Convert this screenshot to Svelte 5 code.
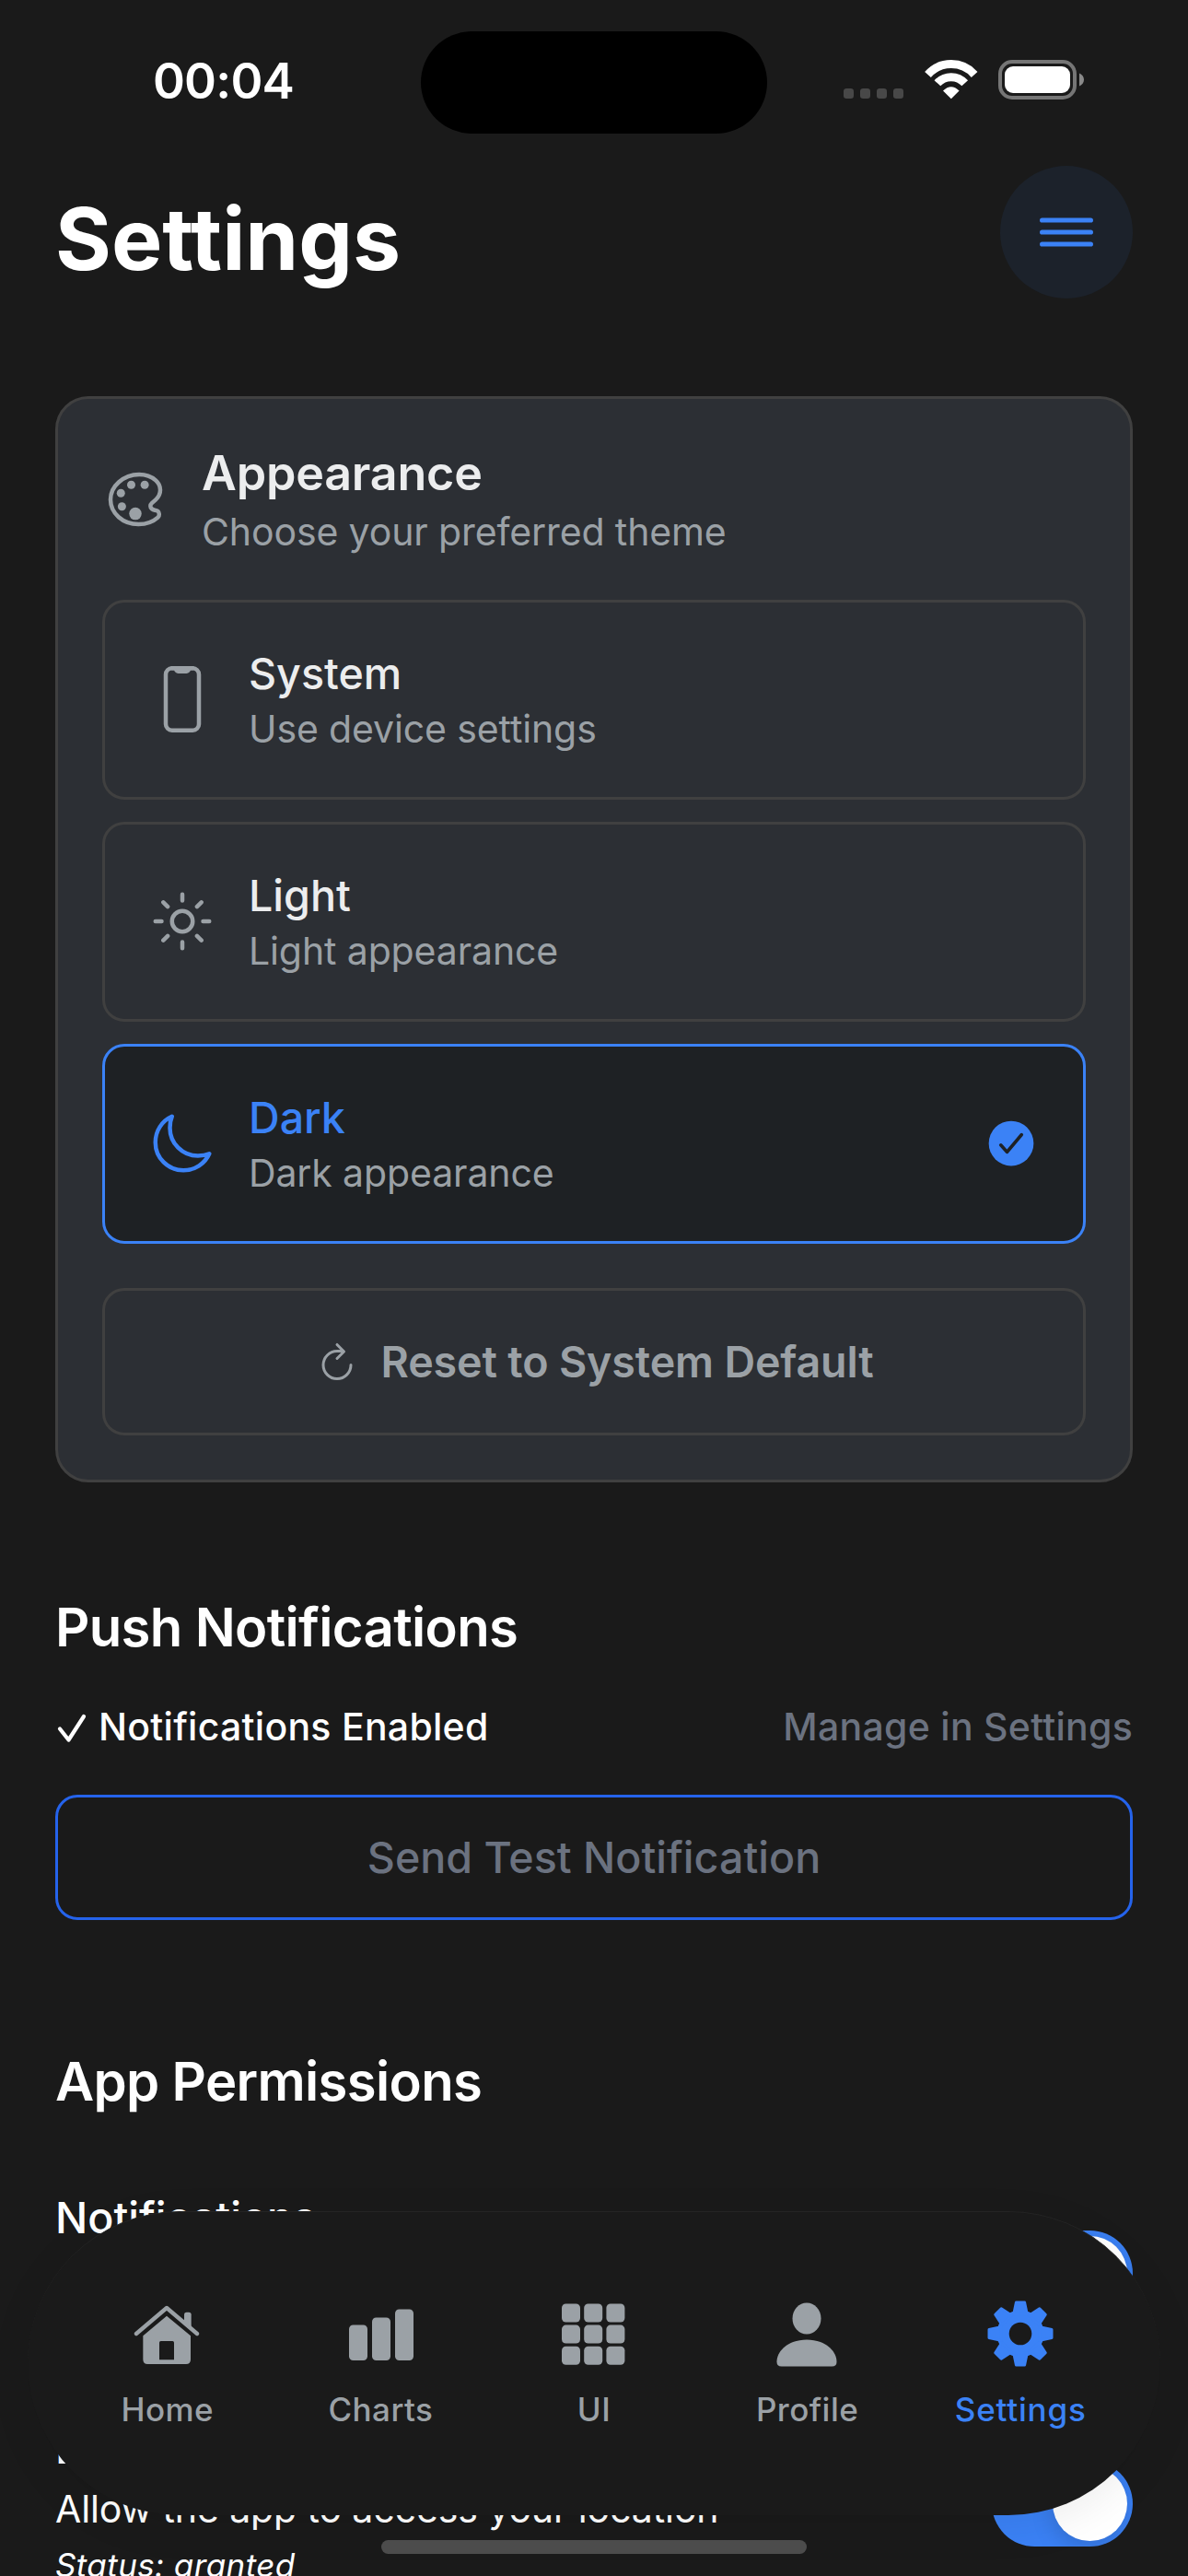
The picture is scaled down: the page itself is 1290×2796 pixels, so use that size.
<script>
  const themes = [
    { id: 'system', title: 'System', hint: 'Use device settings' },
    { id: 'light', title: 'Light', hint: 'Light appearance' },
    { id: 'dark', title: 'Dark', hint: 'Dark appearance' }
  ];
  const permissions = [
    { id: 'notifications', title: 'Notifications', hint: 'Allow the app to send notifications' },
    { id: 'location', title: 'Location', hint: 'Allow the app to access your location' }
  ];
  const tabs = ['Home', 'Charts', 'UI', 'Profile', 'Settings'];
  const teeth = [0, 45, 90, 135, 180, 225, 270, 315];
  const cells = [0, 1, 2];

  let theme = $state('dark');
  let activeTab = $state('Settings');
</script>

<div class="screen">
  <div class="status-bar">
    <div class="time">00:04</div>
    <div class="island"></div>
    <div class="indicators">
      <svg class="dots" width="65" height="43" viewBox="0 0 65 43">
        <rect x="0" y="31" width="11" height="11" rx="3.2" />
        <rect x="18" y="31" width="11" height="11" rx="3.2" />
        <rect x="36" y="31" width="11" height="11" rx="3.2" />
        <rect x="54" y="31" width="11" height="11" rx="3.2" />
      </svg>
      <svg class="wifi" width="58" height="43" viewBox="0 0 58 43">
        <path d="M3.5 15.9A34 34 0 0 1 54.1 15.9" />
        <path d="M13.9 25.3A20 20 0 0 1 43.7 25.3" />
        <path class="solid" d="M20 33.6Q28.8 24.8 37.6 33.6L28.8 42.2Z" />
      </svg>
      <svg class="battery" width="94" height="43" viewBox="0 0 94 43">
        <rect class="shell" x="2" y="2" width="81" height="39" rx="13" />
        <rect class="level" x="7" y="7" width="71" height="29" rx="9" />
        <path class="nub" d="M88 14.6C91 15.8 93 18.4 93 21.5S91 27.2 88 28.4Z" />
      </svg>
    </div>
  </div>

  <header class="header">
    <h1>Settings</h1>
    <button class="menu" aria-label="Menu">
      <svg width="58" height="32" viewBox="0 0 58 32">
        <path d="M2.6 3H55.4M2.6 16H55.4M2.6 29H55.4" />
      </svg>
    </button>
  </header>

  <main>
    <section class="card">
      <div class="card-head">
        <svg class="icon" viewBox="0 0 512 512">
          <path d="M430.11 347.9c-6.6-6.1-16.3-7.6-24.6-9-11.5-1.9-15.9-4-22.6-10-14.3-12.7-14.3-31.1 0-43.8l30.3-26.9c46.4-41 46.4-108.2 0-149.2-34.2-30.1-80.1-45-127.8-45-55.7 0-113.9 20.3-158.8 60.1-83.5 73.8-83.5 194.7 0 268.5 41.5 36.7 97.5 55 152.9 55.4h1.7c55.4 0 110-17.9 148.8-52.4 14.4-12.7 11.99-36.6.1-47.7z" />
          <circle class="fill" cx="144" cy="208" r="32" />
          <circle class="fill" cx="152" cy="311" r="32" />
          <circle class="fill" cx="224" cy="144" r="32" />
          <circle class="fill" cx="256" cy="367" r="48" />
          <circle class="fill" cx="328" cy="144" r="32" />
        </svg>
        <div>
          <h2 class="card-title">Appearance</h2>
          <p class="hint">Choose your preferred theme</p>
        </div>
      </div>

      <div class="options">
        {#each themes as t (t.id)}
          <button class="option" class:selected={theme === t.id} onclick={() => (theme = t.id)}>
            <svg class="icon" viewBox="0 0 512 512">
              {#if t.id === 'system'}
                <rect x="128" y="16" width="256" height="480" rx="48" ry="48" />
                <path d="M176 16h24a8 8 0 0 1 8 8a16 16 0 0 0 16 16h64a16 16 0 0 0 16-16a8 8 0 0 1 8-8h24" />
                <path class="fill" d="M196 16h120l-24 26h-72z" />
              {:else if t.id === 'light'}
                <path d="M256 48v48M256 416v48M403.08 108.92l-33.94 33.94M142.86 369.14l-33.94 33.94M464 256h-48M96 256H48M403.08 403.08l-33.94-33.94M142.86 142.86l-33.94-33.94" />
                <circle cx="256" cy="256" r="80" />
              {:else}
                <path d="M160 136c0-30.62 4.51-61.61 16-88C99.57 81.27 48 159.32 48 248c0 119.29 96.71 216 216 216 88.68 0 166.73-51.57 200-128-26.39 11.49-57.38 16-88 16-119.29 0-216-96.71-216-216z" />
              {/if}
            </svg>
            <span class="option-text">
              <span class="option-title">{t.title}</span>
              <span class="hint">{t.hint}</span>
            </span>
            {#if theme === t.id}
              <svg class="check" viewBox="0 0 512 512">
                <circle cx="256" cy="256" r="208" />
                <path d="M160.5 272L217.5 336L352 176" />
              </svg>
            {/if}
          </button>
        {/each}
      </div>

      <button class="reset" onclick={() => (theme = 'system')}>
        <svg viewBox="0 0 512 512">
          <path d="M320 134H256a160 160 0 1 0 160 160" />
          <path d="M256 58l80 80-80 80" />
        </svg>
        <span>Reset to System Default</span>
      </button>
    </section>

    <h2 class="section-title push">Push Notifications</h2>
    <div class="push-row">
      <span class="enabled">
        <svg width="34" height="34" viewBox="0 0 34 34">
          <path d="M5 18.5L14.5 30.5L31 5" />
        </svg>
        <span>Notifications Enabled</span>
      </span>
      <span class="manage">Manage in Settings</span>
    </div>
    <button class="test">Send Test Notification</button>

    <h2 class="section-title perms">App Permissions</h2>
    <div class="perm-list">
      {#each permissions as p (p.id)}
        <div class="perm">
          <div>
            <div class="perm-title">{p.title}</div>
            <div class="perm-hint">{p.hint}</div>
            <div class="perm-status">Status: granted</div>
          </div>
          <div class="switch"><div class="thumb"></div></div>
        </div>
      {/each}
    </div>
  </main>

  <nav class="tab-bar">
    {#each tabs as tab (tab)}
      <button class="tab" class:active={activeTab === tab} onclick={() => (activeTab = tab)}>
        {#if tab === 'Home'}
          <svg viewBox="48 48 216 216">
            <path class="line" d="M57 156L156 72L255 156" />
            <path d="M213 94Q213 86 221 86H228Q236 86 236 94V144L213 124Z" />
            <path fill-rule="evenodd" d="M156 98L234 163V240Q234 255 219 255H94Q79 255 79 240V163ZM137 180Q132 180 132 185V241H180V185Q180 180 175 180Z" />
          </svg>
        {:else if tab === 'Charts'}
          <svg viewBox="0 0 72 72">
            <rect x="2" y="26.5" width="20" height="38.5" rx="4.5" />
            <rect x="27" y="18.5" width="20" height="46.5" rx="4.5" />
            <rect x="52" y="9.5" width="20" height="55.5" rx="4.5" />
          </svg>
        {:else if tab === 'UI'}
          <svg viewBox="0 0 72 72">
            {#each cells as r}
              {#each cells as c}
                <rect x={2 + c * 24.2} y={3.5 + r * 23.1} width="20" height="20" rx="4.5" />
              {/each}
            {/each}
          </svg>
        {:else if tab === 'Profile'}
          <svg viewBox="0 0 72 72">
            <ellipse cx="36" cy="19.5" rx="15.5" ry="17" />
            <path d="M3.5 66.5C3.5 54 17 42.5 36 42.5S68.5 54 68.5 66.5Q68.5 71.5 63.5 71.5H8.5Q3.5 71.5 3.5 66.5Z" />
          </svg>
        {:else}
          <svg viewBox="-36 -36 72 72">
            <circle r="25.5" />
            {#each teeth as angle}
              <path class="tooth" d="M-4.6 -34H4.6L7.3 -21H-7.3Z" transform="rotate({angle})" />
            {/each}
            <circle class="hole" r="12.3" />
          </svg>
        {/if}
        <span>{tab}</span>
      </button>
    {/each}
  </nav>
  <div class="home-indicator"></div>
</div>

<style>
  :global(body) {
    background: #1a1a1a;
  }
  .screen {
    position: relative;
    box-sizing: border-box;
    width: 1290px;
    height: 2796px;
    overflow: hidden;
    background: #1a1a1a;
    color: #fff;
    font-family: Inter, 'Liberation Sans', sans-serif;
  }
  h1, h2, p {
    margin: 0;
  }
  button {
    margin: 0;
    padding: 0;
    border: 0;
    box-sizing: border-box;
    background: none;
    color: inherit;
    font: inherit;
    text-align: left;
  }
  svg {
    display: block;
    flex: none;
  }

  .status-bar {
    display: grid;
    grid-template-columns: 457px 376px 457px;
    height: 177px;
    box-sizing: border-box;
    padding-top: 33px;
  }
  .time {
    padding-left: 28px;
    margin-top: 23px;
    text-align: center;
    font-size: 53px;
    font-weight: 600;
    letter-spacing: -0.8px;
    line-height: 64px;
  }
  .island {
    height: 111px;
    margin-top: 0.5px;
    border-radius: 56px;
    background: #000;
  }
  .indicators {
    display: flex;
    padding: 32px 0 0 83px;
  }
  .dots {
    fill: #484848;
  }
  .wifi {
    margin-left: 23px;
    fill: none;
    stroke: #fff;
    stroke-width: 9;
  }
  .wifi .solid {
    fill: #fff;
    stroke: none;
  }
  .battery {
    margin-left: 22px;
  }
  .shell {
    fill: none;
    stroke: #767676;
    stroke-width: 4;
  }
  .level {
    fill: #fff;
  }
  .nub {
    fill: #8a8a8a;
  }

  .header {
    display: flex;
    justify-content: space-between;
    padding: 3px 60px 0;
    height: 253px;
    box-sizing: border-box;
  }
  h1 {
    padding-top: 21px;
    font-size: 93px;
    font-weight: 700;
    line-height: 117px;
  }
  .menu {
    display: flex;
    align-items: center;
    justify-content: center;
    width: 144px;
    height: 144px;
    border-radius: 50%;
    background: #1c222b;
  }
  .menu svg {
    fill: none;
    stroke: #3b82f6;
    stroke-width: 5.2;
    stroke-linecap: round;
  }

  main {
    padding: 0 60px;
  }
  .card {
    border: 3px solid #404040;
    border-radius: 36px;
    padding: 48px;
    background: #2c2f34;
  }
  .card-head {
    display: flex;
    align-items: center;
    gap: 36px;
    margin-bottom: 48px;
  }
  .icon {
    width: 72px;
    height: 72px;
    margin-bottom: 1px;
    fill: none;
    stroke: #9ba1a6;
    stroke-width: 32;
    stroke-linecap: round;
    stroke-linejoin: round;
  }
  .icon .fill {
    fill: #9ba1a6;
    stroke: none;
  }
  .card-title {
    color: #ecedee;
    font-size: 52px;
    font-weight: 600;
    letter-spacing: -0.2px;
    line-height: 65px;
  }
  .hint {
    display: block;
    margin-top: 6px;
    color: #9ba1a6;
    font-size: 41px;
    letter-spacing: -0.12px;
    line-height: 51px;
  }
  .options {
    display: flex;
    flex-direction: column;
    gap: 24px;
  }
  .option {
    display: flex;
    align-items: center;
    gap: 36px;
    height: 217px;
    padding: 0 48px;
    border: 3px solid #404040;
    border-radius: 24px;
  }
  .option-text {
    flex: 1;
  }
  .option-title {
    display: block;
    color: #ecedee;
    font-size: 46.6px;
    font-weight: 500;
    line-height: 58px;
  }
  .selected {
    border-color: #3b82f6;
    background: #1e2124;
  }
  .selected .icon {
    stroke: #3b82f6;
  }
  .selected .option-title {
    color: #3b82f6;
  }
  .check {
    width: 60px;
    height: 60px;
    margin-bottom: 1px;
    fill: #3b82f6;
  }
  .check path {
    fill: none;
    stroke: #1e2124;
    stroke-width: 32;
    stroke-linecap: round;
    stroke-linejoin: round;
  }
  .reset {
    display: flex;
    align-items: center;
    justify-content: center;
    gap: 24px;
    width: 100%;
    height: 160px;
    margin-top: 48px;
    border: 3px solid #404040;
    border-radius: 24px;
    color: #9ba1a6;
    font-size: 46.6px;
    font-weight: 600;
    letter-spacing: -0.15px;
    line-height: 58px;
  }
  .reset svg {
    width: 48px;
    height: 48px;
    fill: none;
    stroke: #9ba1a6;
    stroke-width: 32;
    stroke-linecap: round;
    stroke-linejoin: round;
  }

  .section-title {
    font-size: 58px;
    font-weight: 600;
    letter-spacing: -0.65px;
    line-height: 72px;
  }
  .push {
    margin-top: 121px;
  }
  .perms {
    margin-top: 139px;
  }
  .push-row {
    display: flex;
    justify-content: space-between;
    margin-top: 47px;
    font-size: 41px;
    font-weight: 500;
    letter-spacing: 0.27px;
    line-height: 51px;
  }
  .enabled {
    display: flex;
    align-items: center;
    gap: 13px;
  }
  .enabled svg {
    fill: none;
    stroke: #fff;
    stroke-width: 4.2;
    stroke-linecap: round;
    stroke-linejoin: round;
  }
  .manage {
    color: #6b7280;
  }
  .test {
    width: 100%;
    height: 136px;
    margin-top: 48px;
    border: 3px solid #2563eb;
    border-radius: 24px;
    color: #6b7280;
    font-size: 46.6px;
    font-weight: 500;
    line-height: 58px;
    text-align: center;
  }

  .perm-list {
    display: flex;
    flex-direction: column;
    gap: 72px;
    margin-top: 83px;
  }
  .perm {
    display: flex;
    align-items: center;
    justify-content: space-between;
    height: 178px;
    white-space: nowrap;
  }
  .perm-title {
    font-size: 46.6px;
    font-weight: 500;
    line-height: 58px;
  }
  .perm-hint {
    margin-top: 12px;
    font-size: 41px;
    letter-spacing: -0.1px;
    line-height: 51px;
  }
  .perm-status {
    margin-top: 13px;
    font-size: 35px;
    font-style: italic;
    letter-spacing: 0.4px;
    line-height: 44px;
  }
  .switch {
    display: flex;
    justify-content: flex-end;
    box-sizing: border-box;
    width: 153px;
    height: 93px;
    padding: 6px;
    border-radius: 47px;
    background: #3b82f6;
    overflow: hidden;
  }
  .thumb {
    width: 81px;
    height: 81px;
    border-radius: 50%;
    background: #fff;
    box-shadow: 0 9px 24px rgba(0, 0, 0, 0.15);
  }

  /* The tab bar floats over the scrolling content */
  .tab-bar {
    position: absolute;
    left: 30px;
    right: 30px;
    top: 2400px;
    display: flex;
    box-sizing: border-box;
    height: 330px;
    padding: 96px 36px 0;
    border-top: 1px solid #242424;
    border-radius: 165px;
    background: #1a1a1a;
    box-shadow: 0 12px 48px rgba(0, 0, 0, 0.07);
  }
  .tab {
    display: flex;
    flex: 1 1 0;
    flex-direction: column;
    align-items: center;
    gap: 24px;
    color: #9ba1a6;
    fill: #9ba1a6;
    font-size: 35px;
    font-weight: 500;
    letter-spacing: 0.45px;
    line-height: 44px;
  }
  .tab svg {
    width: 72px;
    height: 72px;
    margin-left: -1px;
  }
  .tab .line {
    fill: none;
    stroke: #9ba1a6;
    stroke-width: 13;
    stroke-linecap: round;
    stroke-linejoin: round;
  }
  .tab.active {
    color: #3b82f6;
    fill: #3b82f6;
    letter-spacing: 0.8px;
  }
  .tooth {
    stroke: #3b82f6;
    stroke-width: 3;
    stroke-linejoin: round;
  }
  .hole {
    fill: #1a1a1a;
  }
  .home-indicator {
    position: absolute;
    left: 414px;
    top: 2757px;
    width: 462px;
    height: 15px;
    border-radius: 8px;
    background: #4c4c4c;
  }
</style>
